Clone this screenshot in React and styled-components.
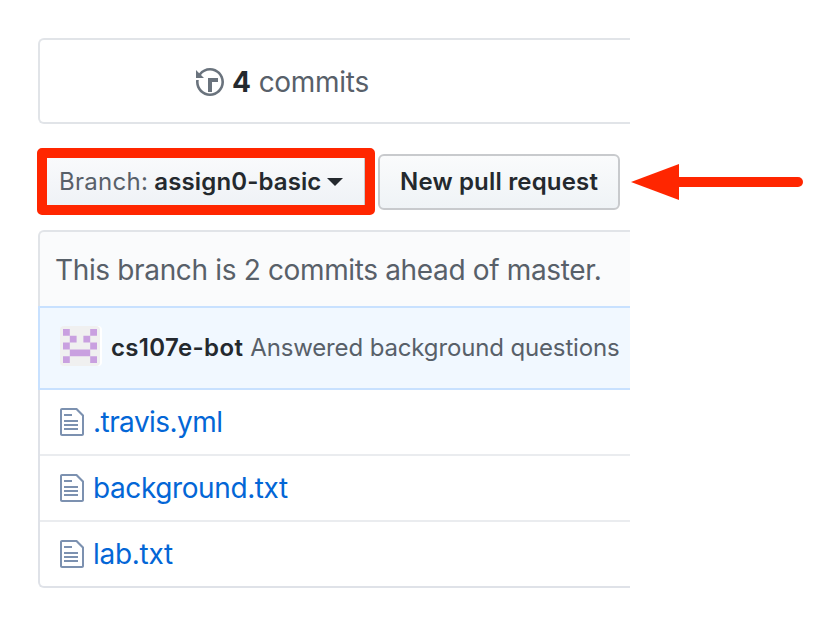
import React from "react";
import styled, { createGlobalStyle } from "styled-components";

const GlobalStyle = createGlobalStyle`
  * { box-sizing: border-box; }
  body {
    margin: 0;
    background: #fff;
    color: #586069;
    font-family: Inter, "Liberation Sans", sans-serif;
  }
`;

const Page = styled.main`
  width: 824px;
  height: 622px;
  padding: 38px 0 0 38px;
  overflow: hidden;
  white-space: nowrap;
`;

const Label = styled.span`
  font-size: ${(p) => p.$size}px;
  font-weight: ${(p) => p.$weight || 400};
  letter-spacing: ${(p) => p.$spacing || 0}px;
  color: ${(p) => p.$color || "#586069"};
  line-height: 32px;
`;

const Summary = styled.section`
  display: flex;
  align-items: center;
  gap: 8px;
  width: 592px;
  height: 86px;
  padding: 2px 0 0 156px;
  border: 2px solid #e1e4e8;
  border-right: 0;
  border-radius: 6px 0 0 6px;
`;

const Toolbar = styled.div`
  display: flex;
  align-items: center;
  gap: 3px;
  height: 67px;
  margin: 24px 0 15px -1px;
`;

const BranchHighlight = styled.div`
  width: 338px;
  height: 67px;
  border: 10px solid #ff2600;
  border-radius: 5px;
`;

const BranchButton = styled.button`
  display: flex;
  align-items: center;
  width: 100%;
  height: 100%;
  padding: 0 0 0 12px;
  border: 0;
  border-right: 1px solid #c6c9cc;
  font-family: inherit;
  background: linear-gradient(#f9fafc, #eff2f6);
`;

const Caret = styled.span`
  margin: 1px 0 0 6px;
  border: 8px solid transparent;
  border-top-color: #24292e;
  border-bottom: 0;
`;

const PullButton = styled.button`
  width: 242px;
  height: 56px;
  padding: 0 0 0 20px;
  border: 2px solid #c8cacd;
  border-radius: 6px;
  font-family: inherit;
  text-align: left;
  background: linear-gradient(#fafbfc, #eff3f6);
`;

const Arrow = styled.svg`
  width: 173px;
  height: 38px;
  margin-left: 8px;
`;

const FileBox = styled.section`
  width: 592px;
`;

const BranchInfo = styled.div`
  display: flex;
  align-items: center;
  height: 76px;
  padding: 2px 0 0 15px;
  border: 2px solid #e1e4e8;
  border-width: 2px 0 0 2px;
  border-radius: 6px 0 0 0;
  background: #fafbfc;
`;

const LatestCommit = styled.div`
  display: flex;
  align-items: center;
  height: 84px;
  padding-left: 20px;
  border: 2px solid #c8e1ff;
  border-right: 0;
  background: #f1f8ff;
`;

const Avatar = styled.svg`
  width: 42px;
  height: 40px;
  margin: -4px 9px 0 0;
`;

const Author = styled(Label)`
  margin-right: 7px;
`;

const Files = styled.div`
  height: 198px;
  border: 2px solid #dfe2e8;
  border-width: 0 0 2px 2px;
  border-radius: 0 0 0 6px;
`;

const FileRow = styled.div`
  display: flex;
  align-items: center;
  gap: 9px;
  height: 66px;
  padding-left: 20px;
  border-bottom: 2px solid #eaecef;
  &:last-child { height: 64px; border: 0; }
`;

const Glyph = styled.svg`
  flex: none;
  width: ${(p) => p.$width}px;
  height: 32px;
  fill: ${(p) => p.$color};
`;

const files = [
  { name: ".travis.yml", spacing: -0.55 },
  { name: "background.txt", spacing: -0.4 },
  { name: "lab.txt", spacing: -0.3 },
];

export default function App() {
  return (
    <>
      <GlobalStyle />
      <Page>
        <Summary>
          <Glyph $width={28} $color="#6a737d" viewBox="0 0 14 16">
            <path d="M8 13H6V6h5v2H8v5zM7 1C4.81 1 2.87 2.02 1.59 3.59L0 2v4h4L2.5 4.5C3.55 3.17 5.17 2.3 7 2.3c3.14 0 5.7 2.56 5.7 5.7s-2.56 5.7-5.7 5.7A5.71 5.71 0 0 1 1.3 8c0-.34.03-.67.09-1H.08C.03 7.33 0 7.66 0 8c0 3.86 3.14 7 7 7s7-3.14 7-7-3.14-7-7-7z" />
          </Glyph>
          <Label $size={28} $weight={700} $spacing={-0.3} $color="#24292e">4</Label>
          <Label $size={28} $spacing={-0.28}>commits</Label>
        </Summary>
        <Toolbar>
          <BranchHighlight>
            <BranchButton>
              <Label $size={24} $spacing={0.28}>Branch:</Label>
              <Label $size={24} $weight={600} $spacing={0.12} $color="#24292e">&nbsp;assign0-basic</Label>
              <Caret />
            </BranchButton>
          </BranchHighlight>
          <PullButton>
            <Label $size={24} $weight={600} $spacing={0.18} $color="#24292e">New pull request</Label>
          </PullButton>
          <Arrow viewBox="0 0 173 38">
            <path d="M0 19 48 1V37Z" fill="#ff2600" />
            <path d="M45 19H167" stroke="#ff2600" strokeWidth="10" strokeLinecap="round" />
          </Arrow>
        </Toolbar>
        <FileBox>
          <BranchInfo>
            <Label $size={28} $spacing={-0.35}>This branch is 2 commits ahead of master.</Label>
          </BranchInfo>
          <LatestCommit>
            <Avatar viewBox="0 0 42 40">
              <rect x="2" width="40" height="40" rx="4" fill="#fff" />
              <rect width="40" height="40" rx="4" fill="#f0f0f0" />
              <path
                fill="#c9a0e0"
                transform="translate(3 3) scale(6.8)"
                d="M0 0h1v1H0zM4 0h1v1H4zM1 1h1v1H1zM3 1h1v1H3zM0 2h1v1H0zM4 2h1v1H4zM1 3h3v1H1zM0 4h1v1H0zM4 4h1v1H4z"
              />
            </Avatar>
            <Author $size={24} $weight={600} $spacing={0.35} $color="#24292e">cs107e-bot</Author>
            <Label $size={24} $spacing={-0.14}>Answered background questions</Label>
          </LatestCommit>
          <Files>
            {files.map((file) => (
              <FileRow key={file.name}>
                <Glyph $width={24} $color="#7c91b0" viewBox="0 0 12 16">
                  <path d="M6 5H2V4h4v1zM2 8h7V7H2v1zm0 2h7V9H2v1zm0 2h7v-1H2v1zm10-7.5V14c0 .55-.45 1-1 1H1c-.55 0-1-.45-1-1V2c0-.55.45-1 1-1h7.5L12 4.5zM11 5L8 2H1v12h10V5z" />
                </Glyph>
                <Label $size={28} $spacing={file.spacing} $color="#0366d6">{file.name}</Label>
              </FileRow>
            ))}
          </Files>
        </FileBox>
      </Page>
    </>
  );
}
